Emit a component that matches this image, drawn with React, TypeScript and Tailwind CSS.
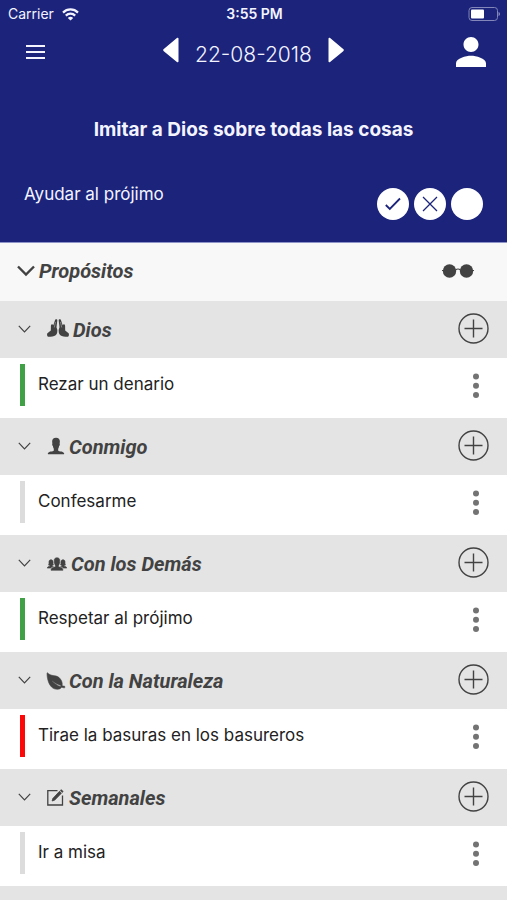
import type { ReactNode } from "react"
import { IoIosLeaf, IoIosPeople, IoIosPerson, IoMdPerson } from "react-icons/io"

type Section = {
  title: string
  icon: ReactNode
  item: string
  bar: string
}

function HandsIcon() {
  const hand =
    "M9.600.2C8.700 0 8.100.6 7.900 1.400L6.300 6.200 5.600 5.400C4.700 5.100 4 5.800 3.900 6.800L3.800 11.600.4 14.300C-.3 15.100.1 17.700 1.200 17.700H3.500C6.200 17.700 8.600 16.900 9.700 15 10.300 13.800 10.400 12.400 10.300 10.800L9.500 8.200 10.300 1.500C10.400.8 10.100.3 9.600.2Z"
  return (
    <svg className="mb-1" width="22" height="18" viewBox="0 0 22 18" fill="currentColor" aria-hidden="true">
      <path d={hand} />
      <path d={hand} transform="matrix(-1 0 0 1 22 0)" />
      <path d="M8.500 3 7.300 8.500M13.500 3 14.700 8.500" stroke="#e4e4e4" strokeWidth=".4" />
    </svg>
  )
}

function ComposeIcon() {
  return (
    <svg className="mr-px" width="17" height="17" viewBox="0 0 17 17" fill="none" stroke="currentColor" aria-hidden="true">
      <path d="M10.500 1.700H.8V16h14.700V6.500" strokeWidth="1.300" />
      <path d="m5.800 9.500 6.700-7.200 1.900 1.900-6.800 7-2.500.8Z" fill="currentColor" strokeWidth=".8" />
      <path d="m13.300 1.500 1-.9 1.900 1.900-1 .9Z" fill="currentColor" strokeWidth=".6" />
    </svg>
  )
}

const sections: Section[] = [
  { title: "Dios", icon: <HandsIcon />, item: "Rezar un denario", bar: "bg-[#3fa046]" },
  { title: "Conmigo", icon: <IoIosPerson className="size-[22px] -mx-0.5 mb-0.5" />, item: "Confesarme", bar: "bg-[#dcdcdc]" },
  { title: "Con los Demás", icon: <IoIosPeople className="size-[22px] -mx-px stroke-current stroke-[14]" />, item: "Respetar al prójimo", bar: "bg-[#3fa046]" },
  { title: "Con la Naturaleza", icon: <IoIosLeaf className="size-[22px] -mx-0.5 stroke-current stroke-[14]" />, item: "Tirae la basuras en los basureros", bar: "bg-[#fd0808]" },
  { title: "Semanales", icon: <ComposeIcon />, item: "Ir a misa", bar: "bg-[#dcdcdc]" },
]

function StatusBar() {
  return (
    <div className="grid grid-cols-[1fr_auto_1fr] items-center h-7 px-2 pr-1.5">
      <div className="flex items-center gap-2 text-sm">
        <span>Carrier</span>
        <svg width="17" height="13" viewBox="0 0 17 13" fill="none" stroke="currentColor" strokeWidth="2.200" aria-hidden="true">
          <path d="M1 4.600C5.200.4 11.800.4 16 4.600" />
          <path d="M3.800 7.600c2.700-2.700 6.700-2.700 9.400 0" />
          <path d="M8.500 12.600 5.800 9.900c1.600-1.500 3.800-1.500 5.400 0Z" fill="currentColor" stroke="none" />
        </svg>
      </div>
      <span className="text-center text-sm font-semibold">3:55 PM</span>
      <svg className="justify-self-end" width="33" height="15" viewBox="0 0 33 15" fill="none" aria-hidden="true">
        <rect x="1" y=".5" width="28.500" height="13" rx="3" stroke="#8286b8" />
        <rect x="3" y="2.500" width="13" height="9" rx="1" fill="#fff" />
        <path d="M30.500 5v4c1-.4 1.500-1 1.500-2s-.5-1.600-1.500-2Z" fill="#8286b8" />
      </svg>
    </div>
  )
}

function Header() {
  return (
    <header className="bg-[#1b237b] text-[#f3f4ff] h-[243px] border-b border-[#8f94c8]">
      <StatusBar />
      <div className="grid grid-cols-[1fr_auto_1fr] items-center h-12 pl-[26px] pr-4">
        <button type="button" aria-label="Menú" className="justify-self-start">
          <svg width="19" height="14" viewBox="0 0 19 14" stroke="currentColor" strokeWidth="2" aria-hidden="true">
            <path d="M0 1h19M0 7h19M0 13h19" />
          </svg>
        </button>
        <div className="flex items-center gap-4 pr-2.5">
          <button type="button" aria-label="Día anterior" className="pb-1">
            <svg width="16" height="26" viewBox="0 0 16 26" fill="#fff" aria-hidden="true">
              <path d="M15.500 1.500v23c0 .8-1 1.100-1.600.5L.8 14.200a1.500 1.500 0 0 1 0-2.300L13.900 1c.6-.6 1.600-.3 1.600.5Z" />
            </svg>
          </button>
          <span className="text-[21px] leading-7 font-light pt-1.5">22-08-2018</span>
          <button type="button" aria-label="Día siguiente" className="pb-1">
            <svg width="16" height="26" viewBox="0 0 16 26" fill="#fff" aria-hidden="true">
              <path d="M.5 1.500v23c0 .8 1 1.100 1.600.5l13.100-10.800a1.500 1.500 0 0 0 0-2.300L2.100 1C1.500.4.5.7.5 1.500Z" />
            </svg>
          </button>
        </div>
        <button type="button" aria-label="Perfil" className="justify-self-end text-white">
          <IoMdPerson className="size-10" />
        </button>
      </div>
      <h1 className="text-center text-[19px] leading-6 font-bold mt-[42px]">Imitar a Dios sobre todas las cosas</h1>
      <div className="flex justify-between mt-10 px-6">
        <p className="text-[17px] leading-6">Ayudar al prójimo</p>
        <div className="flex gap-[5px] pt-1.5 text-[#1b237b]">
          <button type="button" aria-label="Cumplido" className="size-8 rounded-full bg-white grid place-items-center">
            <svg width="16" height="14" viewBox="0 0 16 14" fill="none" stroke="currentColor" strokeWidth="1.800" aria-hidden="true">
              <path d="m.8 8 4 4L15 1.500" />
            </svg>
          </button>
          <button type="button" aria-label="No cumplido" className="size-8 rounded-full bg-white grid place-items-center">
            <svg width="16" height="16" viewBox="0 0 16 16" fill="none" stroke="currentColor" strokeWidth="1.300" aria-hidden="true">
              <path d="m1 1 14 14M15 1 1 15" />
            </svg>
          </button>
          <button type="button" aria-label="Sin marcar" className="size-8 rounded-full bg-white" />
        </div>
      </div>
    </header>
  )
}

function SectionGroup({ title, icon, item, bar }: Section) {
  return (
    <section>
      <div className="flex items-center justify-between h-[57px] bg-[#e4e4e4] pl-[18px] pr-[18px]">
        <button type="button" className="flex items-center">
          <svg className="mr-4 mb-0.5" width="13" height="8" viewBox="0 0 13 8" fill="none" stroke="currentColor" strokeWidth="1.200" aria-hidden="true">
            <path d="m.8.8 5.700 6 5.700-6" />
          </svg>
          {icon}
          <h3 className="font-['Roboto',sans-serif] text-xl font-bold italic ml-1">{title}</h3>
        </button>
        <button type="button" aria-label={`Agregar a ${title}`} className="pb-0.5">
          <svg width="31" height="31" viewBox="0 0 31 31" fill="none" stroke="currentColor" strokeWidth="1.400" aria-hidden="true">
            <circle cx="15.500" cy="15.500" r="14.500" />
            <path d="M15.500 6.500v18M6.500 15.500h18" />
          </svg>
        </button>
      </div>
      <div className="flex items-start justify-between h-[60px] bg-white pl-5 pr-7 pt-[6px]">
        <div className="flex">
          <span className={`w-[5px] h-[42px] ${bar}`} />
          <p className="text-[17px] leading-6 text-[#222] ml-[13px] mt-2">{item}</p>
        </div>
        <button type="button" aria-label={`Opciones de ${item}`} className="mt-[9px]">
          <svg width="6" height="26" viewBox="0 0 6 26" fill="#737373" aria-hidden="true">
            <circle cx="3" cy="3.500" r="3" />
            <circle cx="3" cy="12.800" r="3" />
            <circle cx="3" cy="22" r="3" />
          </svg>
        </button>
      </div>
    </section>
  )
}

export default function App() {
  return (
    <div className="flex flex-col min-h-screen bg-white text-[#424242] font-['Inter','Liberation_Sans',sans-serif]">
      <Header />
      <main className="flex flex-col flex-1">
        <div className="flex items-center justify-between h-[58px] bg-[#f8f8f8] pl-[17px] pr-[33px] pb-0.5">
          <button type="button" className="flex items-center">
            <svg className="mr-1" width="18" height="12" viewBox="0 0 18 12" fill="none" stroke="currentColor" strokeWidth="2.400" aria-hidden="true">
              <path d="m1 1.500 8 8 8-8" />
            </svg>
            <h2 className="font-['Roboto',sans-serif] text-xl font-bold italic">Propósitos</h2>
          </button>
          <button type="button" aria-label="Ver propósitos">
            <svg width="32" height="14" viewBox="0 0 32 14" fill="currentColor" aria-hidden="true">
              <circle cx="7.500" cy="7" r="6.700" />
              <circle cx="24.500" cy="7" r="6.700" />
              <path d="M0 6.500h1.500M30.500 6.500H32M13.500 6c1.500-1.200 3.500-1.200 5 0" fill="none" stroke="currentColor" strokeWidth="1.200" />
            </svg>
          </button>
        </div>
        {sections.map((section) => (
          <SectionGroup key={section.title} {...section} />
        ))}
        <div className="flex-1 bg-[#e4e4e4]" />
      </main>
    </div>
  )
}
